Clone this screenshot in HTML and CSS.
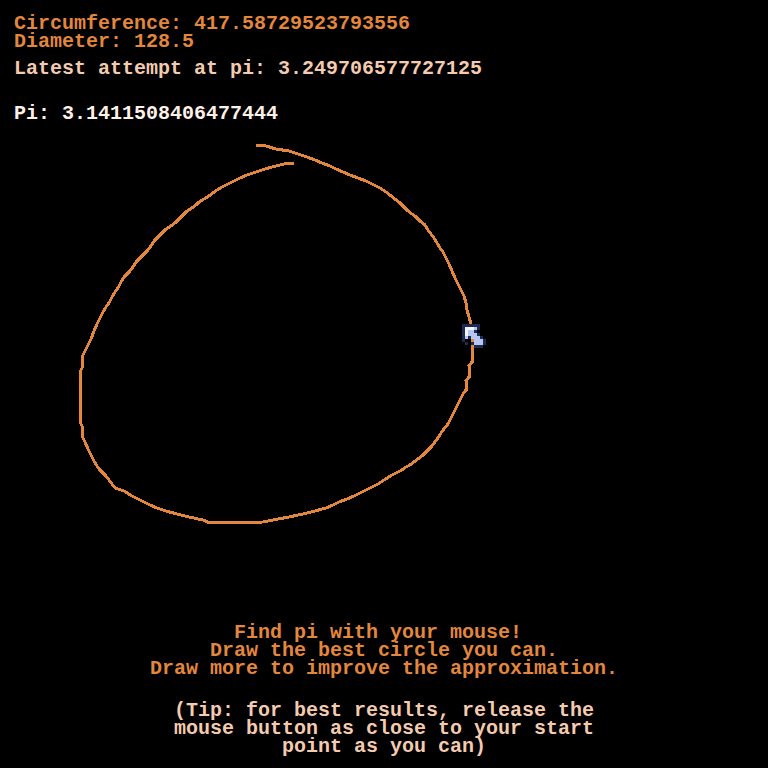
FILE: index.html
```html
<!DOCTYPE html>
<html>
<head>
<meta charset="utf-8">
<link rel="stylesheet" href="styles.css">
</head>
<body>
<div class="screen">
  <div class="stats">
    <div class="line orange">Circumference: 417.58729523793556</div>
    <div class="line orange">Diameter: 128.5</div>
    <div class="line peach gap-a">Latest attempt at pi: 3.249706577727125</div>
    <div class="line white gap-b">Pi: 3.1411508406477444</div>
  </div>

  <svg class="canvas" width="768" height="768" viewBox="0 0 768 768">
    <polyline class="stroke" points="256,145 266,146 276,149 289,151 298,154 307,157 315,160 322,163 330,166 336,169 343,172 350,175 358,178 366,181 374,185 380,188 386,192 390,195 395,199 400,203 404,207 408,211 412,214 416,217 420,221 425,225 428,230 431,234 434,238 437,243 440,248 443,252 446,258 449,264 452,271 455,278 458,284 461,290 464,296 466,303 467,310 469,317 471,324 472,335 472,362 469,366 469,377 466,381 466,390 463,394 460,400 457,406 454,412 451,418 448,424 444,429 441,433 438,438 435,442 432,446 429,449 425,453 422,456 418,459 414,462 410,465 406,467 402,470 398,472 392,475 384,480 378,484 372,487 366,490 360,493 354,496 347,499 339,502 333,505 326,508 315,511 303,514 289,517 273,520 263,522 210,523 203,520 189,517 177,514 166,511 157,508 150,505 144,502 138,499 132,496 124,491 118,489 115,488 112,484 109,480 106,476 103,473 100,470 97,466 94,461 91,455 88,449 85,442 82,436 82,426 80,422 80,372 82,368 82,357 85,351 88,345 91,339 94,331 97,324 100,318 103,312 106,307 109,303 112,297 115,292 118,288 121,282 124,277 127,274 130,271 133,267 136,262 139,259 142,256 145,253 148,250 151,246 154,241 157,238 160,235 163,232 166,229 171,226 175,223 178,220 181,217 184,214 187,211 192,208 196,205 199,202 204,199 209,196 213,193 217,190 222,187 228,184 234,181 240,178 247,175 256,172 265,169 276,166 288,163 294,163"/>
    <g class="cursor">
      <path class="c-navy" d="M462 324h18v3h-18z M462 327h3v15h-3z M477 327h3v3h-3z M474 330h3v3h-3z M477 333h3v3h-3z M465 342h3v3h-3z M468 336h3v3h-3z M471 342h3v3h-3z M480 336h3v3h-3z M483 339h3v6h-3z M474 345h9v3h-9z"/>
      <path class="c-white" d="M465 327h9v3h-9z M465 330h3v6h-3z"/>
      <path class="c-light" d="M474 327h3v3h-3z M468 330h6v3h-6z M468 333h9v3h-9z M465 336h3v3h-3z M471 336h9v3h-9z M474 339h9v3h-9z M474 342h9v3h-9z"/>
    </g>
  </svg>

  <div class="help">
    <div class="line orange shift">Find pi with your mouse!</div>
    <div class="line orange">Draw the best circle you can.</div>
    <div class="line orange">Draw more to improve the approximation.</div>
    <div class="line peach gap-c">(Tip: for best results, release the</div>
    <div class="line peach">mouse button as close to your start</div>
    <div class="line peach">point as you can)</div>
  </div>
</div>
</body>
</html>
```

FILE: styles.css
```css
html, body {
  margin: 0;
  padding: 0;
  background: #000;
}

.screen {
  position: relative;
  width: 768px;
  height: 768px;
  background: #000;
  display: flex;
  flex-direction: column;
  overflow: hidden;
  font-family: "Liberation Mono", "DejaVu Sans Mono", monospace;
  font-weight: bold;
  font-size: 20px;
  letter-spacing: 0;
}

.line {
  height: 18px;
  line-height: 18px;
  white-space: pre;
}

.stats {
  padding: 15px 0 0 14px;
}

.gap-a { margin-top: 9px; }
.gap-b { margin-top: 27px; }
.gap-c { margin-top: 24px; }

.orange { color: #e2873d; }
.peach { color: #f5cbb0; }
.white { color: #fff1e8; }

.canvas {
  position: absolute;
  left: 0;
  top: 0;
  shape-rendering: crispEdges;
}

.stroke {
  fill: none;
  stroke: #e2873d;
  stroke-width: 3;
  stroke-linejoin: miter;
}

.c-navy { fill: #1d2b53; }
.c-white { fill: #f2f4ff; }
.c-light { fill: #b4c6f2; }

.help {
  margin-top: auto;
  padding-bottom: 12px;
  text-align: center;
}

.shift {
  padding-right: 12px;
}
```
